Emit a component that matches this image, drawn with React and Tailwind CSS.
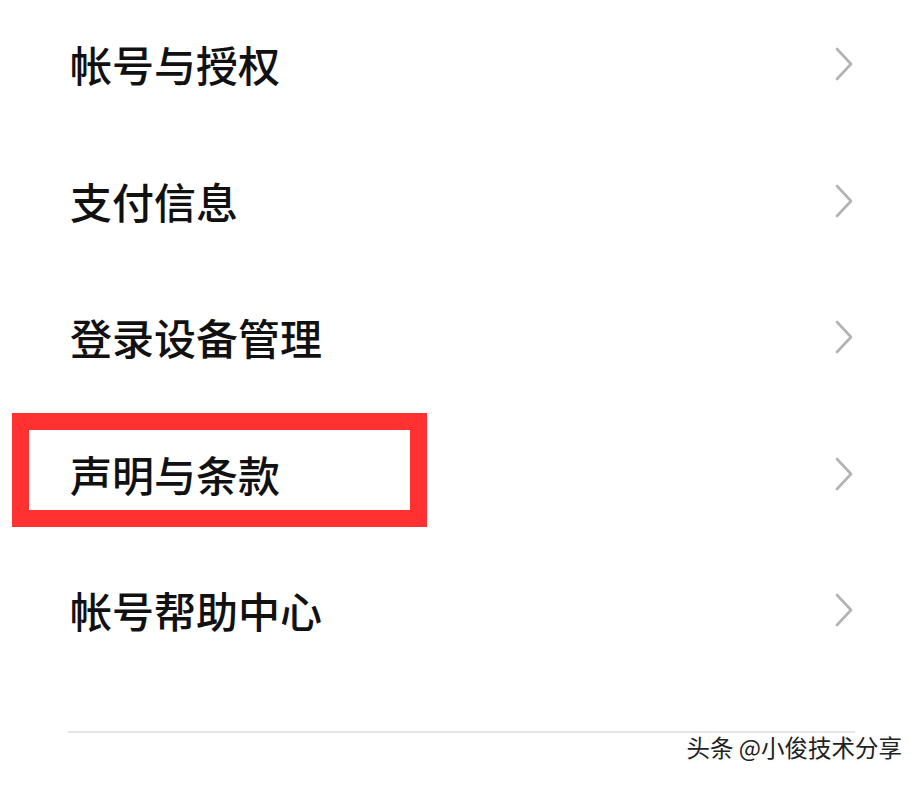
const items = ['帐号与授权', '支付信息', '登录设备管理', '声明与条款', '帐号帮助中心']

function Chevron() {
  return (
    <svg width="20" height="34" viewBox="0 0 20 34" fill="none" aria-hidden="true">
      <polyline points="3,2 17,17 3,32" stroke="#b3b3b3" strokeWidth="2.6" strokeLinecap="round" strokeLinejoin="round" />
    </svg>
  )
}

export default function App() {
  return (
    <div
      className="relative h-[785px] w-[923px] overflow-hidden bg-white"
      style={{ fontFamily: '"Noto Sans CJK SC", "Noto Sans", sans-serif' }}
    >
      <ul className="-mt-[4px]">
        {items.map((label, i) => (
          <li key={label} className="relative flex h-[136.5px] items-center justify-between pl-[70px] pr-[69px]">
            <span className="text-[42px] font-medium leading-none text-[#111]">{label}</span>
            <Chevron />
            {i === 3 && (
              <div className="pointer-events-none absolute left-[12px] top-[7px] h-[114px] w-[415px] border-[17px] border-[#ff3131]" />
            )}
          </li>
        ))}
      </ul>
      <div className="ml-[68px] mr-[68px] mt-[52px] h-[2px] bg-[#e6e6e6]" />
      <div className="flex justify-end pr-[21px] pt-[3px]">
        <span
          className="text-[23.5px] leading-none text-[#222]"
          style={{ textShadow: '1px 1px 0 #fff, -1px -1px 0 #fff, 1px -1px 0 #fff, -1px 1px 0 #fff, 0 0 2px #999' }}
        >
          头条 @小俊技术分享
        </span>
      </div>
    </div>
  )
}
